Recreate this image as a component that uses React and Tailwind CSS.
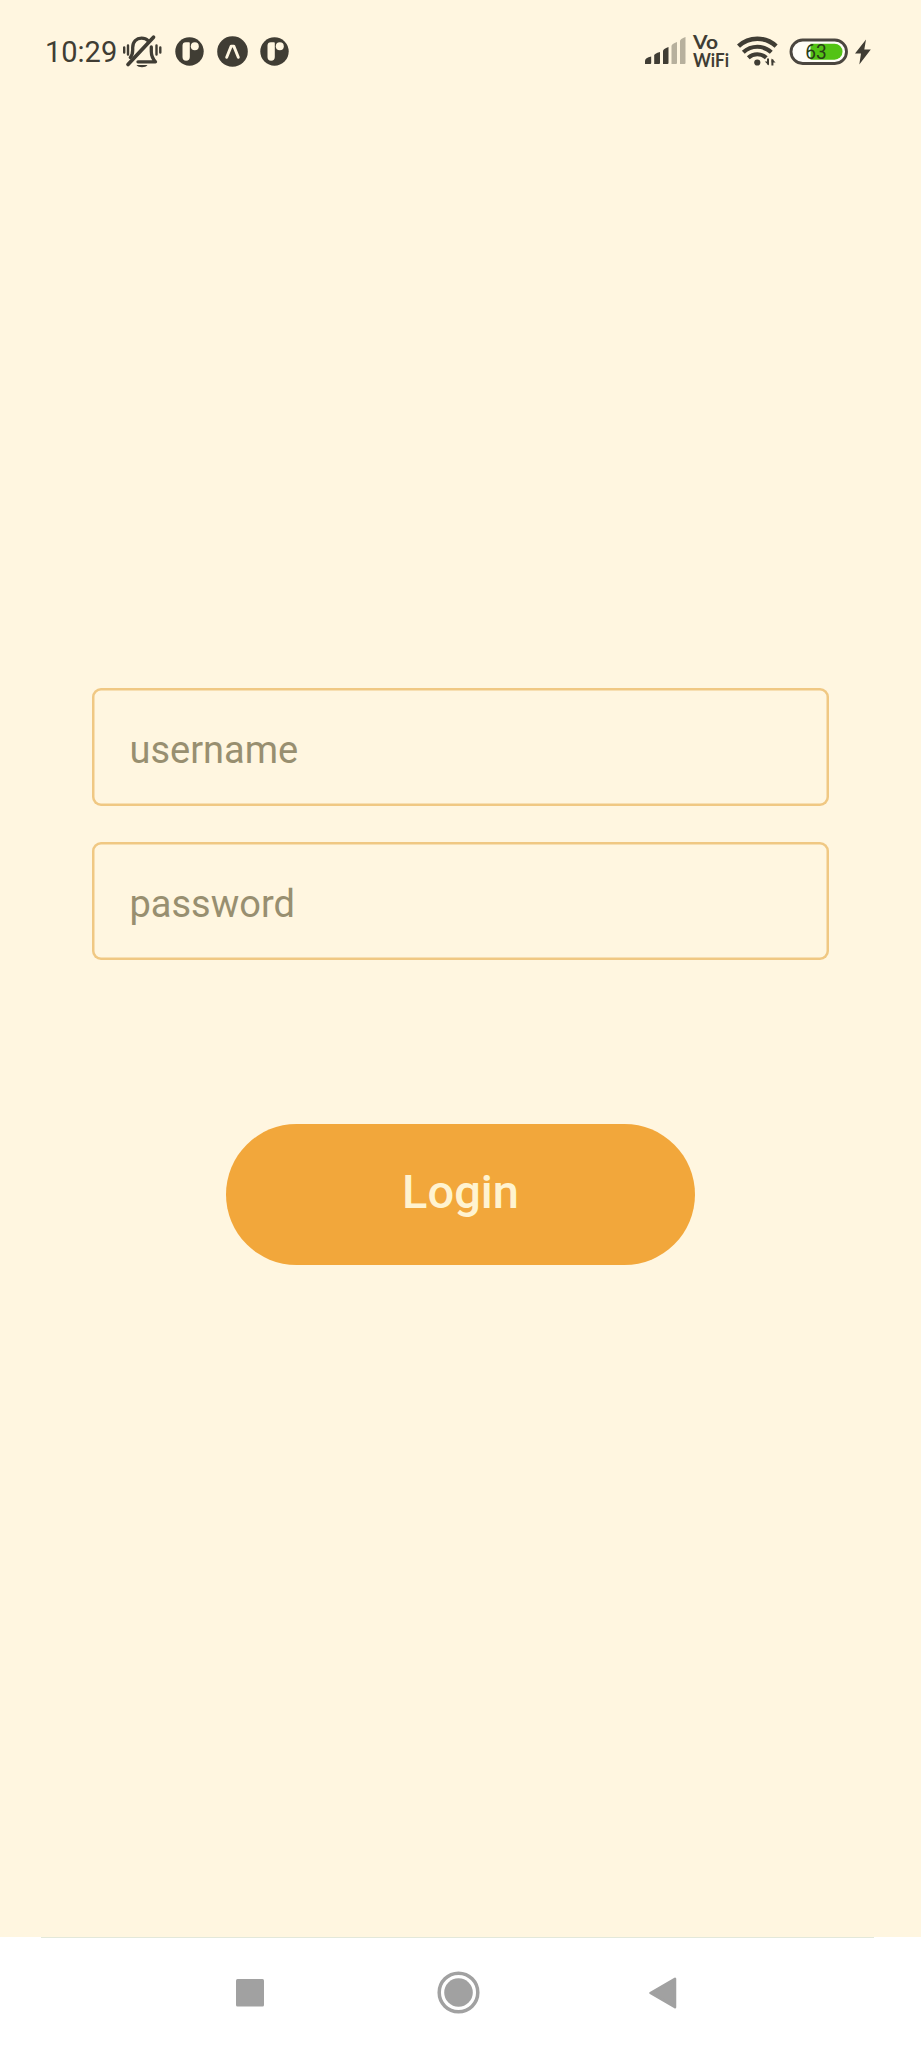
function MutedBell() {
  return (
    <svg width="40" height="36" viewBox="0 0 40 36" fill="none" stroke="#403d34" strokeLinecap="round" strokeLinejoin="round">
      <path d="M8.300 24.500C10 22.500 10.700 20 10.700 17v-2.500C10.700 8.500 14.500 5.200 19.500 5.200c3 0 5 .8 6.800 2.600" strokeWidth="3.300" />
      <path d="M29.300 14V18.500c0 4 1.200 7 4.200 10.300H16" strokeWidth="3.300" />
      <path d="M6 31.500 31.500 4.200" strokeWidth="3.700" />
      <path d="M14.500 32h11c-1.800 3-9.200 3-11 0z" fill="#403d34" stroke="none" />
      <path d="M2.200 14.500v5M6 12.500v9M34.500 12.500v9M38.300 14.500v5" strokeWidth="2.400" />
    </svg>
  );
}

function LetterR() {
  return (
    <svg width="29" height="29" viewBox="0 0 29 29">
      <circle cx="14.500" cy="14.500" r="14.200" fill="#403d34" />
      <path d="M7.500 8.600a3.400 3.400 0 0 1 3.400-3.400H14a.8.8 0 0 1 .8.8v14a3.650 3.650 0 0 1-7.300 0z" fill="#fff6e0" />
      <circle cx="19.800" cy="9.200" r="4" fill="#fff6e0" />
    </svg>
  );
}

function Caret() {
  return (
    <svg width="31" height="31" viewBox="0 0 31 31">
      <circle cx="15.500" cy="15.500" r="15.300" fill="#403d34" />
      <path d="M9.700 21.300 14.200 10.100h2.600l4.500 11.200" fill="none" stroke="#fff6e0" strokeWidth="2.900" strokeLinecap="round" strokeLinejoin="round" />
    </svg>
  );
}

function Signal() {
  return (
    <svg width="42" height="28" viewBox="0 0 42 28" fill="#403d34">
      <path d="M0 27v-3q0-3.500 6.200-4.500V26q0 1-1 1z" />
      <path d="M9.200 27V18.500q0-2 5.800-3.500V26q0 1-1 1z" />
      <path d="M18 27V14q0-2 5.500-4V26q0 1-1 1z" />
      <path d="M26.500 27V9q0-2 5.500-4V26q0 1-1 1z" fill="#b7b09d" />
      <path d="M35 27V4q0-2 5.500-4V26q0 1-1 1z" fill="#b7b09d" />
    </svg>
  );
}

function VoWifi() {
  return (
    <svg width="38" height="34" viewBox="0 0 38 34" className="overflow-visible font-['Lato','Roboto',sans-serif] font-bold" fill="#403d34">
      <text x="0" y="15" fontSize="19.500" textLength="25" lengthAdjust="spacingAndGlyphs">Vo</text>
      <text x="0" y="33" fontSize="18.500" textLength="36" lengthAdjust="spacingAndGlyphs">WiFi</text>
    </svg>
  );
}

function Wifi() {
  return (
    <svg width="42" height="30" viewBox="0 0 42 30" fill="none" stroke="#403d34">
      <path d="M1.500 10.200a27.500 27.500 0 0 1 37.600 0" strokeWidth="4.500" />
      <path d="M6.300 16.300a20.500 20.500 0 0 1 28 0" strokeWidth="4.200" />
      <path d="M11.300 21.800a13 13 0 0 1 18 0" strokeWidth="4" />
      <circle cx="20.300" cy="26.500" r="3.100" fill="#403d34" stroke="none" />
      <path d="M31 22.500v6M35.400 23.500v6" strokeWidth="2" />
      <path d="M27.800 25.500h4v4zM38.600 26.500h-4v-4z" fill="#403d34" stroke="none" />
    </svg>
  );
}

function Battery() {
  return (
    <svg width="60" height="28" viewBox="0 0 60 28" className="font-['Roboto',sans-serif]">
      <rect x="2" y="2" width="55.500" height="23.500" rx="11.700" fill="#fffdf8" stroke="#4b463f" strokeWidth="2.900" />
      <path d="M21.500 5.700H45.500a8 8 0 0 1 0 16H21.500z" fill="#53c314" />
      <text x="16.300" y="20.800" fontSize="20" textLength="21.500" lengthAdjust="spacingAndGlyphs" fill="#293d17">63</text>
    </svg>
  );
}

function Field({ type, placeholder }) {
  return (
    <input
      type={type}
      placeholder={placeholder}
      className="h-[117.500px] w-full rounded-[9px] bg-transparent px-[37.500px] pt-[7px] text-[38px] text-[#403d34] shadow-[inset_0_0_0_2.5px_#f0c883] outline-none placeholder:text-[#988f70]"
    />
  );
}

export default function App() {
  return (
    <div className="flex h-[2048px] w-[921px] flex-col overflow-hidden bg-[#fff6e0] font-['Roboto',sans-serif]">
      <header className="flex h-[102px] shrink-0 items-center justify-between pl-[45px] pr-[50px]">
        <div className="flex items-center">
          <span className="w-[77px] pt-[3px] text-[29px] leading-none text-[#403d34]">10:29</span>
          <MutedBell />
          <div className="ml-[13px] flex items-center gap-[12.500px]">
            <LetterR />
            <Caret />
            <LetterR />
          </div>
        </div>
        <div className="flex items-center">
          <Signal />
          <div className="ml-[6px]"><VoWifi /></div>
          <div className="ml-[6px]"><Wifi /></div>
          <div className="ml-[10px] pt-px"><Battery /></div>
          <svg width="16" height="26" viewBox="0 0 16 26" className="ml-[6px] mt-px" fill="#403d34">
            <path d="M11 .5 0 14.500h6L4.300 25.500 15.800 10.500H9.300z" />
          </svg>
        </div>
      </header>
      <main className="flex flex-1 flex-col items-center px-[92px] pt-[586px]">
        <form className="flex w-full flex-col items-center">
          <div className="flex w-full flex-col gap-[36.500px]">
            <Field type="text" placeholder="username" />
            <Field type="password" placeholder="password" />
          </div>
          <button type="button" className="mt-[164.500px] h-[141px] w-[469px] rounded-full bg-[#f2a73b] pb-[7px] text-[47px] font-medium leading-none text-[#fff3d0]">
            Login
          </button>
        </form>
      </main>
      <nav className="flex h-[111px] shrink-0 flex-col bg-white pl-[41px] pr-[47px]">
        <div className="h-px bg-[#e3e8da]" />
        <div className="flex flex-1 items-center pb-px pl-[195px]">
          <svg width="28" height="28" viewBox="0 0 28 28"><rect width="28" height="27.500" rx="1.500" fill="#a1a1a1" /></svg>
          <svg width="43" height="43" viewBox="0 0 43 43" className="ml-[173px]">
            <circle cx="21.500" cy="21.500" r="19.300" fill="none" stroke="#a1a1a1" strokeWidth="3.500" />
            <circle cx="21.500" cy="21.500" r="14.300" fill="#a1a1a1" />
          </svg>
          <svg width="28" height="32" viewBox="0 0 28 32" className="ml-[169px]">
            <path d="M1.500 16 26 1.800v28.400z" fill="#a1a1a1" stroke="#a1a1a1" strokeWidth="2.500" strokeLinejoin="round" />
          </svg>
        </div>
      </nav>
    </div>
  );
}
